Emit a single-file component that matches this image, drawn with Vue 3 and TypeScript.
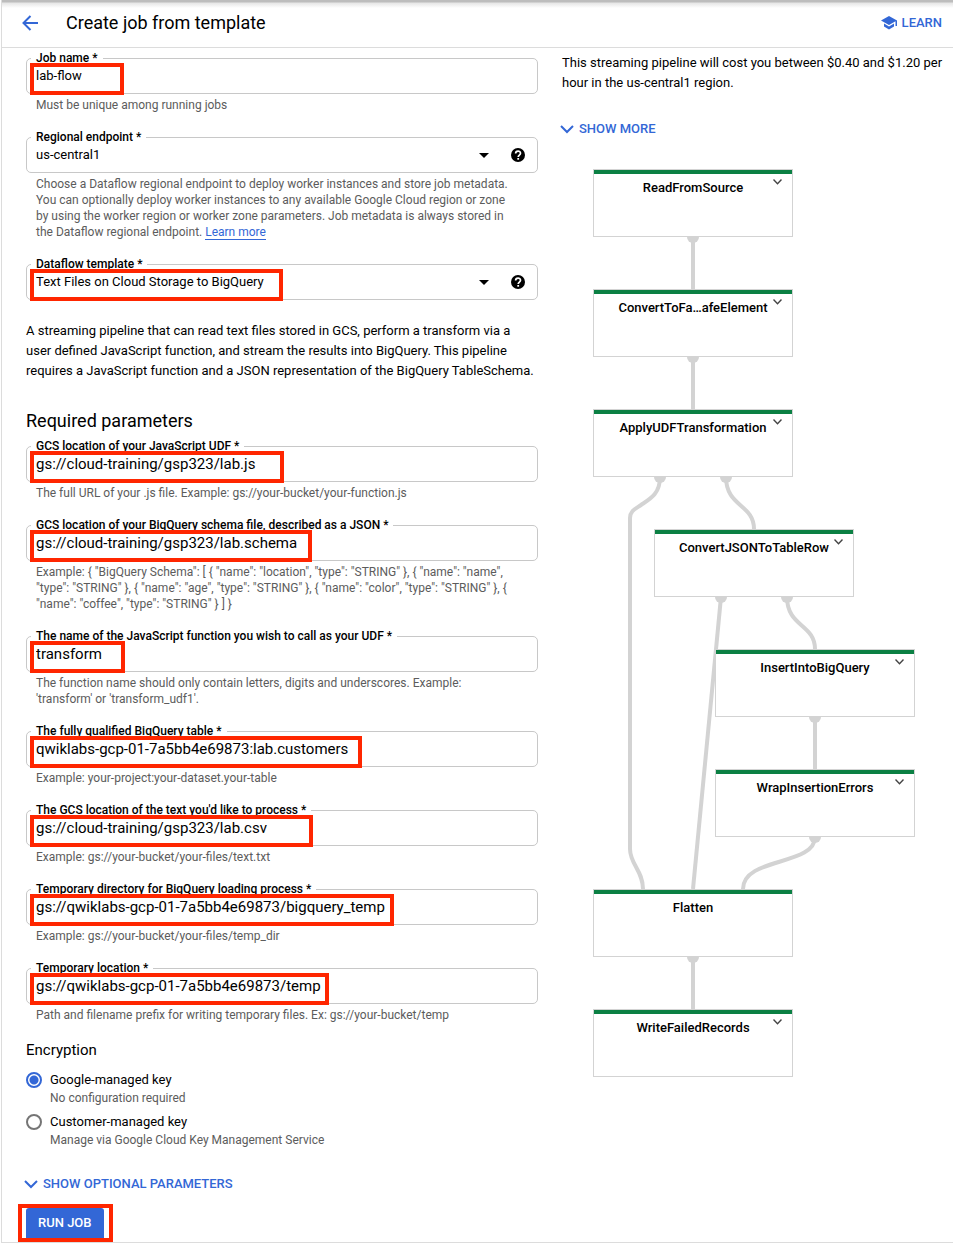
<script setup lang="ts">
import { ref } from 'vue'

interface TextField {
  id: string
  label: string
  value: string
  hint: string
  mark: number
}

interface GraphNode {
  name: string
  x: number
  y: number
  expandable: boolean
}

const jobName = ref('lab-flow')
const region = ref('us-central1')
const template = ref('Text Files on Cloud Storage to BigQuery')
const encryption = ref('google')

const params = ref<TextField[]>([
  {
    id: 'udf-path',
    label: 'GCS location of your JavaScript UDF *',
    value: 'gs://cloud-training/gsp323/lab.js',
    hint: 'The full URL of your .js file. Example: gs://your-bucket/your-function.js',
    mark: 254,
  },
  {
    id: 'schema-path',
    label: 'GCS location of your BigQuery schema file, described as a JSON *',
    value: 'gs://cloud-training/gsp323/lab.schema',
    hint: 'Example: { "BigQuery Schema": [ { "name": "location", "type": "STRING" }, { "name": "name", "type": "STRING" }, { "name": "age", "type": "STRING" }, { "name": "color", "type": "STRING" }, { "name": "coffee", "type": "STRING" } ] }',
    mark: 282,
  },
  {
    id: 'udf-name',
    label: 'The name of the JavaScript function you wish to call as your UDF *',
    value: 'transform',
    hint: "The function name should only contain letters, digits and underscores. Example: 'transform' or 'transform_udf1'.",
    mark: 95,
  },
  {
    id: 'table',
    label: 'The fully qualified BigQuery table *',
    value: 'qwiklabs-gcp-01-7a5bb4e69873:lab.customers',
    hint: 'Example: your-project:your-dataset.your-table',
    mark: 332,
  },
  {
    id: 'input-text',
    label: "The GCS location of the text you'd like to process *",
    value: 'gs://cloud-training/gsp323/lab.csv',
    hint: 'Example: gs://your-bucket/your-files/text.txt',
    mark: 283,
  },
  {
    id: 'temp-dir',
    label: 'Temporary directory for BigQuery loading process *',
    value: 'gs://qwiklabs-gcp-01-7a5bb4e69873/bigquery_temp',
    hint: 'Example: gs://your-bucket/your-files/temp_dir',
    mark: 364,
  },
  {
    id: 'temp-location',
    label: 'Temporary location *',
    value: 'gs://qwiklabs-gcp-01-7a5bb4e69873/temp',
    hint: 'Path and filename prefix for writing temporary files. Ex: gs://your-bucket/temp',
    mark: 299,
  },
])

const keys = [
  { id: 'google', label: 'Google-managed key', hint: 'No configuration required' },
  { id: 'customer', label: 'Customer-managed key', hint: 'Manage via Google Cloud Key Management Service' },
]

const nodes: GraphNode[] = [
  { name: 'ReadFromSource', x: 0, y: 0, expandable: true },
  { name: 'ConvertToFa…afeElement', x: 0, y: 120, expandable: true },
  { name: 'ApplyUDFTransformation', x: 0, y: 240, expandable: true },
  { name: 'ConvertJSONToTableRow', x: 61, y: 360, expandable: true },
  { name: 'InsertIntoBigQuery', x: 122, y: 480, expandable: true },
  { name: 'WrapInsertionErrors', x: 122, y: 600, expandable: true },
  { name: 'Flatten', x: 0, y: 720, expandable: false },
  { name: 'WriteFailedRecords', x: 0, y: 840, expandable: true },
]

const edges = [
  'M100 68V120',
  'M100 188V240',
  'M67 308C67 325 57 330 48 336C42 340 37 342 37 349V680C37 695 50 702 50 720',
  'M133 308C133 338 161 335 161 360',
  'M128 428L100 720',
  'M194 428C194 458 222 455 222 480',
  'M222 548V600',
  'M222 668C222 697 150 688 150 720',
  'M100 788V840',
]

const ports = [
  [100, 68],
  [100, 188],
  [67, 308],
  [133, 308],
  [128, 428],
  [194, 428],
  [222, 548],
  [222, 668],
  [100, 788],
]
</script>

<template>
  <div class="page">
    <header class="bar">
      <button class="back" type="button" aria-label="Back">
        <svg width="16" height="16" viewBox="0 0 16 16" fill="none" stroke="currentColor" stroke-width="2">
          <path d="M16 8H2M8.500 1L1.500 8L8.500 15" />
        </svg>
      </button>
      <h1>Create job from template</h1>
      <button class="action learn" type="button">
        <svg width="16" height="14" viewBox="0 0 16 14" fill="currentColor">
          <path d="M8 0L0 4.500L8 9L14.500 5.300V10H16V4.500Z" />
          <path d="M3 7.600V10.600L8 13.500L13 10.600V7.600L8 10.500Z" />
        </svg>
        LEARN
      </button>
    </header>

    <main class="columns">
      <form class="form" @submit.prevent>
        <div class="field">
          <div class="box">
            <label for="job-name">Job name *</label>
            <input id="job-name" v-model="jobName" class="small" type="text" />
            <span class="mark" :style="{ width: '94px' }"></span>
          </div>
          <p class="hint">Must be unique among running jobs</p>
        </div>

        <div class="field">
          <div class="box">
            <label for="region">Regional endpoint *</label>
            <select id="region" v-model="region">
              <option>us-central1</option>
            </select>
            <svg class="caret" width="10" height="5" viewBox="0 0 10 5"><path d="M0 0H10L5 5Z" /></svg>
            <button class="help" type="button" aria-label="Help: regional endpoint">
              <svg width="14" height="14" viewBox="0 0 14 14">
                <circle cx="7" cy="7" r="7" />
                <path d="M4.600 5.600C4.600 2.400 9.500 2.400 9.500 5.300C9.500 7 7.200 7.200 7.200 9" fill="none" stroke="#fff" stroke-width="1.700" />
                <rect x="6.300" y="10" width="1.800" height="1.700" fill="#fff" />
              </svg>
            </button>
          </div>
          <p class="hint">
            Choose a Dataflow regional endpoint to deploy worker instances and store job metadata. You can
            optionally deploy worker instances to any available Google Cloud region or zone by using the worker
            region or worker zone parameters. Job metadata is always stored in the Dataflow regional endpoint.
            <a href="#">Learn more</a>
          </p>
        </div>

        <div class="field">
          <div class="box">
            <label for="template">Dataflow template *</label>
            <select id="template" v-model="template">
              <option>Text Files on Cloud Storage to BigQuery</option>
            </select>
            <svg class="caret" width="10" height="5" viewBox="0 0 10 5"><path d="M0 0H10L5 5Z" /></svg>
            <button class="help" type="button" aria-label="Help: Dataflow template">
              <svg width="14" height="14" viewBox="0 0 14 14">
                <circle cx="7" cy="7" r="7" />
                <path d="M4.600 5.600C4.600 2.400 9.500 2.400 9.500 5.300C9.500 7 7.200 7.200 7.200 9" fill="none" stroke="#fff" stroke-width="1.700" />
                <rect x="6.300" y="10" width="1.800" height="1.700" fill="#fff" />
              </svg>
            </button>
            <span class="mark" :style="{ width: '253px' }"></span>
          </div>
        </div>

        <p class="about">
          A streaming pipeline that can read text files stored in GCS, perform a transform via a user defined
          JavaScript function, and stream the results into BigQuery. This pipeline requires a JavaScript function
          and a JSON representation of the BigQuery TableSchema.
        </p>

        <h2>Required parameters</h2>

        <div v-for="p in params" :key="p.id" class="field">
          <div class="box">
            <label :for="p.id">{{ p.label }}</label>
            <input :id="p.id" v-model="p.value" type="text" />
            <span class="mark" :style="{ width: p.mark + 'px' }"></span>
          </div>
          <p class="hint">{{ p.hint }}</p>
        </div>

        <fieldset class="keys">
          <legend>Encryption</legend>
          <div v-for="k in keys" :key="k.id" class="key">
            <input :id="k.id" v-model="encryption" type="radio" name="encryption" :value="k.id" />
            <label :for="k.id">{{ k.label }}</label>
            <p>{{ k.hint }}</p>
          </div>
        </fieldset>

        <button class="action toggle" type="button">
          <svg width="14" height="9" viewBox="0 0 14 9" fill="none" stroke="currentColor" stroke-width="2">
            <path d="M1 1L7 7L13 1" />
          </svg>
          SHOW OPTIONAL PARAMETERS
        </button>

        <div class="submit">
          <button class="run" type="submit">RUN JOB</button>
        </div>
      </form>

      <aside class="side">
        <p class="cost">
          This streaming pipeline will cost you between $0.40 and $1.20 per hour in the us-central1 region.
        </p>
        <button class="action toggle" type="button">
          <svg width="14" height="9" viewBox="0 0 14 9" fill="none" stroke="currentColor" stroke-width="2">
            <path d="M1 1L7 7L13 1" />
          </svg>
          SHOW MORE
        </button>

        <div class="graph">
          <svg class="edges" width="322" height="908" viewBox="0 0 322 908">
            <path v-for="d in edges" :key="d" :d="d" fill="none" stroke="#d3d3d3" stroke-width="4" />
            <circle v-for="[cx, cy] in ports" :key="cx + '-' + cy" :cx="cx" :cy="cy" r="6" fill="#d3d3d3" />
          </svg>
          <div v-for="n in nodes" :key="n.name" class="node" :style="{ left: n.x + 'px', top: n.y + 'px' }">
            {{ n.name }}
            <button v-if="n.expandable" type="button" :aria-label="'Expand ' + n.name">
              <svg width="9" height="6" viewBox="0 0 9 6" fill="none" stroke="#444" stroke-width="1.400">
                <path d="M.500 .500L4.500 4.700L8.500 .500" />
              </svg>
            </button>
          </div>
        </div>
      </aside>
    </main>
  </div>
</template>

<style>
body {
  margin: 0;
  background: #fff;
}
</style>

<style scoped>
.page {
  margin-left: 1px;
  border-left: 1px solid #dcdcdc;
  border-bottom: 1px solid #dcdcdc;
  font-family: Roboto, 'Liberation Sans', sans-serif;
  font-size: 13px;
  line-height: 20px;
  color: #000;
}

h1,
h2,
p {
  margin: 0;
}

button {
  border: 0;
  padding: 0;
  background: none;
  font: inherit;
  color: inherit;
  cursor: pointer;
}

.bar {
  display: flex;
  align-items: center;
  box-sizing: border-box;
  height: 48px;
  padding: 0 11px 2px 20px;
  border-bottom: 1px solid #dcdcdc;
  background: linear-gradient(#bdbdbd 0 2px, #e6e6e6 3px, #fff 8px);
}

.back {
  display: flex;
  color: #3367d6;
}

h1 {
  flex: 1;
  margin-left: 28px;
  font-size: 18px;
  font-weight: 400;
  line-height: 24px;
}

.action {
  display: flex;
  align-items: center;
  gap: 5px;
  color: #3367d6;
  font-weight: 500;
}

.toggle {
  margin-left: -2px;
}

.columns {
  display: grid;
  grid-template-columns: 512fr 381fr;
  gap: 24px;
  padding: 0 10px 0 24px;
}

.form {
  padding-top: 10px;
}

.field + .field {
  margin-top: 24px;
}

.box {
  position: relative;
  display: flex;
  align-items: center;
  box-sizing: border-box;
  height: 36px;
  border: 1px solid #c8c8c8;
  border-radius: 5px;
}

.box label {
  position: absolute;
  top: -9px;
  left: 4px;
  padding: 0 5px;
  background: #fff;
  font-size: 12px;
  font-weight: 500;
  line-height: 16px;
}

.box input,
.box select {
  flex: 1;
  min-width: 0;
  height: 20px;
  margin: 0;
  padding: 0 9px;
  border: 0;
  outline: 0;
  background: none;
  appearance: none;
  font: inherit;
  font-size: 15px;
  color: inherit;
}

.box select,
.box .small {
  font-size: 13px;
}

.caret {
  margin-right: 22px;
}

.help {
  display: flex;
  margin-right: 12px;
}

.mark {
  position: absolute;
  top: 4px;
  left: 3px;
  box-sizing: border-box;
  height: 32px;
  border: 4px solid #ff2600;
  pointer-events: none;
}

.hint {
  margin-top: 3px;
  padding: 0 26px 0 10px;
  font-size: 12px;
  line-height: 16px;
  color: #5c5c5c;
}

.hint a {
  color: #3367d6;
  text-decoration: none;
  border-bottom: 1px solid #3367d6;
}

.about {
  margin-top: 21px;
}

h2 {
  margin: 28px 0 13px;
  font-size: 18px;
  font-weight: 400;
  line-height: 24px;
}

.keys {
  margin: 17px 0 0;
  padding: 0;
  border: 0;
}

.keys legend {
  padding: 0;
  font-size: 15px;
}

.key {
  display: grid;
  grid-template-columns: 16px 1fr;
  column-gap: 8px;
  align-items: center;
  margin-top: 10px;
}

.key + .key {
  margin-top: 6px;
}

.key input {
  box-sizing: border-box;
  width: 16px;
  height: 16px;
  margin: 0;
  border: 2px solid #757575;
  border-radius: 50%;
  background: #fff;
  appearance: none;
}

.key input:checked {
  border-color: #3367d6;
  background: radial-gradient(circle, #3367d6 4px, #fff 5px);
}

.key p {
  grid-column: 2;
  font-size: 12px;
  line-height: 16px;
  color: #5c5c5c;
}

.form > .action {
  margin-top: 26px;
}

.submit {
  width: fit-content;
  margin: 10px 0 0 -8px;
  border: 4px solid #ff2600;
}

.run {
  display: block;
  height: 30px;
  margin: 0 5px 0 4px;
  padding: 0 12px;
  border-radius: 3px 3px 0 0;
  background: #3367d6;
  color: #fff;
  font-weight: 500;
}

.side {
  padding-top: 5px;
}

.side .action {
  margin-top: 26px;
}

.graph {
  position: relative;
  width: 322px;
  height: 908px;
  margin: 30px 0 0 31px;
}

.edges {
  display: block;
}

.node {
  position: absolute;
  box-sizing: border-box;
  width: 200px;
  height: 68px;
  padding-top: 8px;
  border: 1px solid #d3d3d3;
  background: linear-gradient(#0b8043 0 4px, #fff 4px);
  font-weight: 500;
  text-align: center;
}

.node button {
  position: absolute;
  top: 9px;
  right: 10px;
  display: flex;
}
</style>
